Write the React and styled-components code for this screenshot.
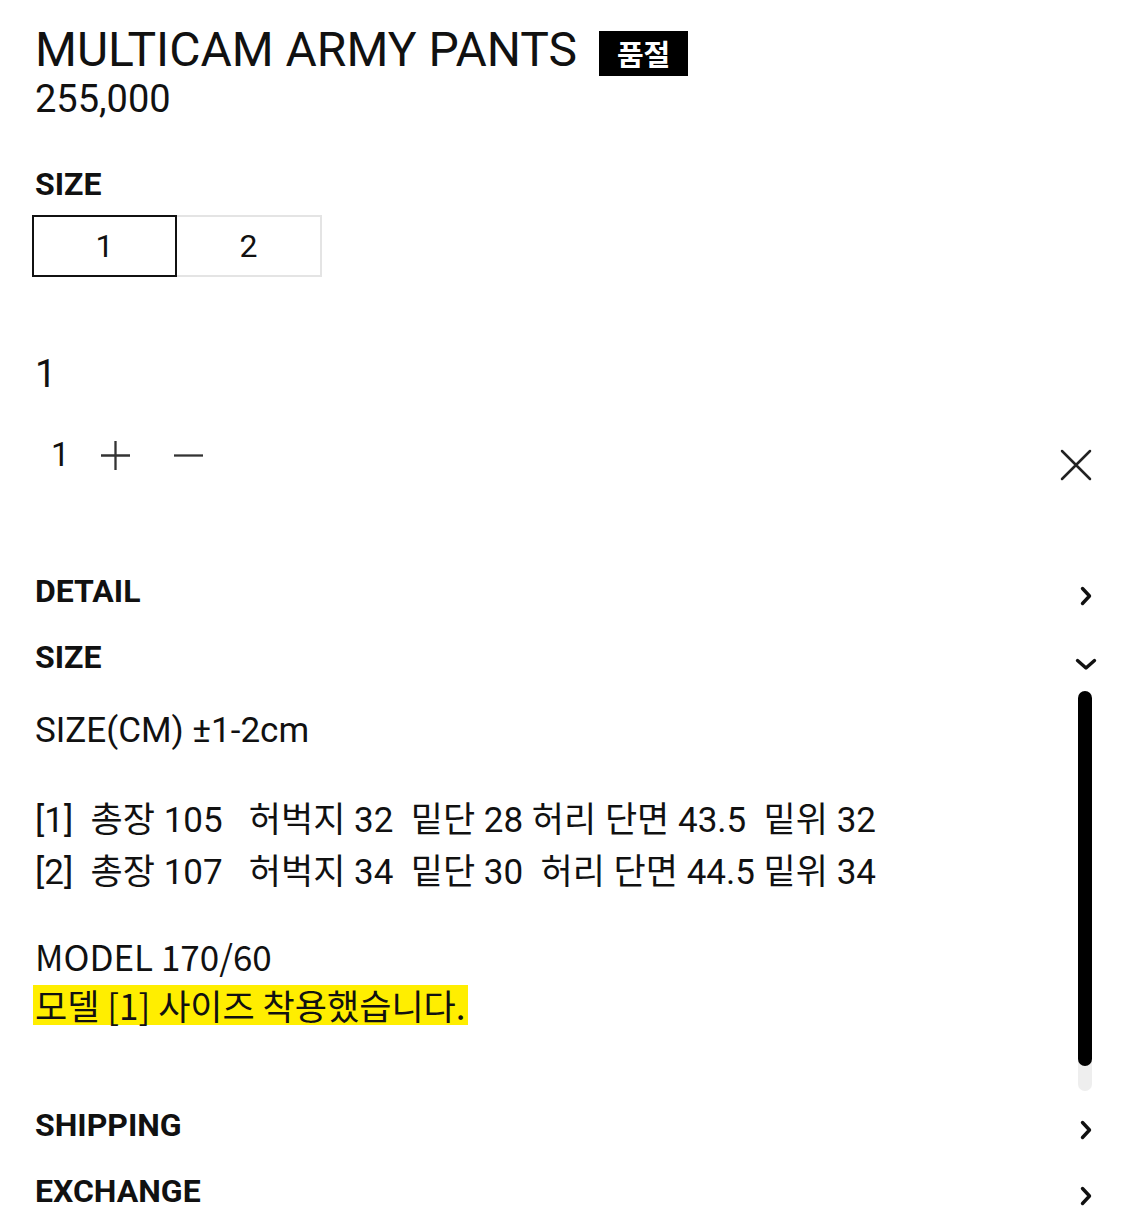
import React, { useState } from "react";
import styled, { createGlobalStyle } from "styled-components";

const GlobalStyle = createGlobalStyle`
  html, body {
    margin: 0;
    padding: 0;
    background: #ffffff;
  }
  body {
    font-family: Roboto, "Noto Sans CJK KR", sans-serif;
    color: #111111;
  }
`;

const Page = styled.div`
  width: 1125px;
  height: 1228px;
  box-sizing: border-box;
  padding: 22px 32px 0 35px;
  overflow: hidden;
`;

const TitleRow = styled.div`
  display: flex;
  align-items: center;
  gap: 22px;
`;

const Title = styled.h1`
  margin: 0;
  font-size: 48px;
  font-weight: 400;
  line-height: 56px;
  letter-spacing: 0;
`;

const SoldOut = styled.span`
  display: inline-flex;
  align-items: center;
  justify-content: center;
  width: 89px;
  height: 45px;
  margin-top: 6px;
  background: #000;
  color: #fff;
  font-family: "Noto Sans CJK KR", sans-serif;
  font-size: 29px;
  font-weight: 700;
  line-height: 1;
`;

const Price = styled.div`
  font-size: 38px;
  line-height: 42px;
`;

const Label = styled.div`
  font-size: 32px;
  font-weight: 700;
  line-height: 40px;
  margin-top: ${(p) => p.$top || 0}px;
`;

const SizeOptions = styled.div`
  display: flex;
  margin-top: 11px;
  margin-left: -3px;
`;

const SizeButton = styled.button`
  width: 145px;
  height: 62px;
  box-sizing: border-box;
  border: ${(p) => (p.$active ? "2px solid #111" : "2px solid #e4e4e4")};
  ${(p) => (p.$active ? "" : "border-left: none;")}
  background: #fff;
  font-family: Roboto, sans-serif;
  font-size: 32px;
  color: #111;
  padding: 0;
  cursor: pointer;
`;

const SelectedName = styled.div`
  font-size: 38px;
  line-height: 44px;
  margin-top: 75px;
`;

const QuantityRow = styled.div`
  display: flex;
  align-items: center;
  justify-content: space-between;
  margin-top: 39px;
`;

const Stepper = styled.div`
  display: flex;
  align-items: center;
  gap: 30px;
  padding-left: 16px;
`;

const Qty = styled.span`
  font-size: 33px;
  line-height: 40px;
`;

const IconButton = styled.button`
  display: flex;
  align-items: center;
  justify-content: center;
  padding: 0;
  border: none;
  background: none;
  cursor: pointer;
  color: #222;
`;

const MinusButton = styled(IconButton)`
  margin-left: 12px;
`;

const CloseButton = styled(IconButton)`
  margin-top: 10px;
  margin-bottom: -10px;
`;

const Accordion = styled.div`
  margin-top: 83px;
`;

const AccordionHeader = styled.div`
  display: flex;
  align-items: center;
  justify-content: space-between;
  height: 66px;
`;

const Chevron = styled.span`
  display: flex;
  width: 30px;
  justify-content: center;
  margin-right: -8px;
  margin-top: ${(p) => (p.$down ? 14 : 10)}px;
`;

const Panel = styled.div`
  display: flex;
  justify-content: space-between;
  height: 402px;
`;

const PanelBody = styled.div`
  padding-top: 15px;
`;

const Line = styled.p`
  margin: 0;
  font-size: 35px;
  line-height: 52px;
  margin-top: ${(p) => p.$top || 0}px;
  white-space: pre;
`;

const ModelLine = styled(Line)`
  font-family: "Noto Sans CJK KR", sans-serif;
  font-size: 35px;
`;

const Highlight = styled.span`
  display: inline-block;
  height: 40px;
  line-height: 40px;
  margin-top: 3px;
  margin-left: -2px;
  padding: 0 2px;
  background: #ffee00;
  font-family: "Noto Sans CJK KR", sans-serif;
  font-size: 35px;
`;

const ScrollTrack = styled.div`
  position: relative;
  width: 14px;
  height: 400px;
  margin-top: 1px;
  margin-right: 1px;
  border-radius: 7px;
  background: #eeeeee;
`;

const ScrollThumb = styled.div`
  position: absolute;
  left: 0;
  top: 0;
  width: 14px;
  height: 375px;
  border-radius: 7px;
  background: #000;
`;

const ChevronRight = () => (
  <svg width="12" height="20" viewBox="0 0 12 20" fill="none">
    <polyline points="2.5,2.5 9.5,10 2.5,17.5" stroke="#111" strokeWidth="3.4" strokeLinecap="round" strokeLinejoin="round" />
  </svg>
);

const ChevronDown = () => (
  <svg width="22" height="13" viewBox="0 0 22 13" fill="none">
    <polyline points="2.5,2.5 11,10 19.5,2.5" stroke="#111" strokeWidth="3.4" strokeLinecap="round" strokeLinejoin="round" />
  </svg>
);

const Plus = () => (
  <svg width="31" height="31" viewBox="0 0 31 31">
    <path d="M15.5 1v29M1 15.5h29" stroke="#333" strokeWidth="2.3" />
  </svg>
);

const Minus = () => (
  <svg width="31" height="31" viewBox="0 0 31 31">
    <path d="M1 15.5h29" stroke="#333" strokeWidth="2.3" />
  </svg>
);

const Close = () => (
  <svg width="34" height="34" viewBox="0 0 34 34">
    <path d="M3 3l28 28M31 3L3 31" stroke="#222" strokeWidth="2.5" strokeLinecap="round" />
  </svg>
);

const sizeRows = [
  "[1]  총장 105   허벅지 32  밑단 28 허리 단면 43.5  밑위 32",
  "[2]  총장 107   허벅지 34  밑단 30  허리 단면 44.5 밑위 34",
];

export default function App() {
  const [size, setSize] = useState("1");
  const [qty, setQty] = useState(1);

  return (
    <>
      <GlobalStyle />
      <Page>
        <TitleRow>
          <Title>MULTICAM ARMY PANTS</Title>
          <SoldOut>품절</SoldOut>
        </TitleRow>
        <Price>255,000</Price>

        <Label $top={44}>SIZE</Label>
        <SizeOptions>
          {["1", "2"].map((s) => (
            <SizeButton key={s} $active={size === s} onClick={() => setSize(s)}>
              {s}
            </SizeButton>
          ))}
        </SizeOptions>

        <SelectedName>{size}</SelectedName>
        <QuantityRow>
          <Stepper>
            <Qty>{qty}</Qty>
            <IconButton onClick={() => setQty(qty + 1)}>
              <Plus />
            </IconButton>
            <MinusButton onClick={() => setQty(Math.max(1, qty - 1))}>
              <Minus />
            </MinusButton>
          </Stepper>
          <CloseButton>
            <Close />
          </CloseButton>
        </QuantityRow>

        <Accordion>
          <AccordionHeader>
            <Label>DETAIL</Label>
            <Chevron><ChevronRight /></Chevron>
          </AccordionHeader>
          <AccordionHeader>
            <Label>SIZE</Label>
            <Chevron $down><ChevronDown /></Chevron>
          </AccordionHeader>
          <Panel>
            <PanelBody>
              <Line>SIZE(CM) ±1-2cm</Line>
              <Line $top={38}>{sizeRows[0]}</Line>
              <Line>{sizeRows[1]}</Line>
              <ModelLine $top={31}>MODEL 170/60</ModelLine>
              <Line>
                <Highlight>모델 [1] 사이즈 착용했습니다.</Highlight>
              </Line>
            </PanelBody>
            <ScrollTrack>
              <ScrollThumb />
            </ScrollTrack>
          </Panel>
          <AccordionHeader>
            <Label>SHIPPING</Label>
            <Chevron><ChevronRight /></Chevron>
          </AccordionHeader>
          <AccordionHeader>
            <Label>EXCHANGE</Label>
            <Chevron><ChevronRight /></Chevron>
          </AccordionHeader>
        </Accordion>
      </Page>
    </>
  );
}
